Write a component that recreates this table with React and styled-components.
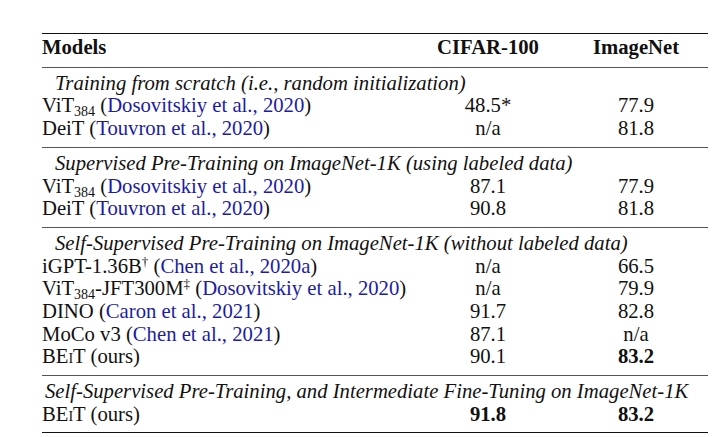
import React from "react";
import styled, { createGlobalStyle } from "styled-components";

const GlobalStyle = createGlobalStyle`
  html, body {
    margin: 0;
    padding: 0;
    background: #fff;
  }
  body {
    font-family: "Liberation Serif", "Times New Roman", serif;
    color: #111;
  }
`;

const Page = styled.div`
  padding: 33px 0 0 42px;
`;

const Table = styled.table`
  width: 666px;
  border-collapse: collapse;
  font-family: "Liberation Serif", "Times New Roman", serif;
  font-size: 20.7px;
  line-height: 22.7px;
  color: #111;
`;

const Head = styled.thead`
  border-top: 1.5px solid #111;
  border-bottom: 1px solid #555;
`;

const Group = styled.tbody`
  border-bottom: ${(p) => (p.$last ? "1.5px solid #111" : "1px solid #555")};
  & > tr:first-child > td {
    padding-top: 4px;
  }
  & > tr:last-child > td {
    padding-bottom: ${(p) => (p.$last ? "6px" : "7px")};
  }
`;

const HeadCell = styled.th`
  font-family: inherit;
  font-size: inherit;
  font-weight: bold;
  text-align: ${(p) => (p.$left ? "left" : "center")};
  padding: 2px 0 8px ${(p) => (p.$pl ? "8px" : "0")};
  width: ${(p) => p.$w}px;
`;

const Caption = styled.td`
  font-family: inherit;
  font-size: inherit;
  font-style: italic;
  padding: 0 0 0 ${(p) => p.$indent}px;
  white-space: nowrap;
`;

const Cell = styled.td`
  font-family: inherit;
  font-size: inherit;
  padding: 0 0 0 ${(p) => (p.$pl ? "8px" : "0")};
  text-align: ${(p) => (p.$left ? "left" : "center")};
  font-weight: ${(p) => (p.$bold ? "bold" : "normal")};
  white-space: nowrap;
`;

const Cite = styled.span`
  color: #1c1ca4;
`;

const Sub = styled.sub`
  font-size: 14px;
  line-height: 0;
  vertical-align: -4px;
`;

const Sup = styled.sup`
  font-size: 13px;
  line-height: 0;
  vertical-align: 7px;
`;

const Caps = styled.span`
  font-variant: small-caps;
`;

const Beit = () => (
  <>
    BE<Caps>i</Caps>T (ours)
  </>
);

const Vit = () => (
  <>
    ViT<Sub>384</Sub>
  </>
);

const groups = [
  {
    title: "Training from scratch (i.e., random initialization)",
    rows: [
      { model: <><Vit /> (<Cite>Dosovitskiy et al., 2020</Cite>)</>, cifar: "48.5*", imagenet: "77.9" },
      { model: <>DeiT (<Cite>Touvron et al., 2020</Cite>)</>, cifar: "n/a", imagenet: "81.8" },
    ],
  },
  {
    title: "Supervised Pre-Training on ImageNet-1K (using labeled data)",
    rows: [
      { model: <><Vit /> (<Cite>Dosovitskiy et al., 2020</Cite>)</>, cifar: "87.1", imagenet: "77.9" },
      { model: <>DeiT (<Cite>Touvron et al., 2020</Cite>)</>, cifar: "90.8", imagenet: "81.8" },
    ],
  },
  {
    title: "Self-Supervised Pre-Training on ImageNet-1K (without labeled data)",
    rows: [
      { model: <>iGPT-1.36B<Sup>†</Sup> (<Cite>Chen et al., 2020a</Cite>)</>, cifar: "n/a", imagenet: "66.5" },
      { model: <><Vit />-JFT300M<Sup>‡</Sup> (<Cite>Dosovitskiy et al., 2020</Cite>)</>, cifar: "n/a", imagenet: "79.9" },
      { model: <>DINO (<Cite>Caron et al., 2021</Cite>)</>, cifar: "91.7", imagenet: "82.8" },
      { model: <>MoCo v3 (<Cite>Chen et al., 2021</Cite>)</>, cifar: "87.1", imagenet: "n/a" },
      { model: <Beit />, cifar: "90.1", imagenet: "83.2", boldImagenet: true },
    ],
  },
  {
    title: "Self-Supervised Pre-Training, and Intermediate Fine-Tuning on ImageNet-1K",
    indent: 3,
    last: true,
    rows: [
      { model: <Beit />, cifar: "91.8", imagenet: "83.2", boldCifar: true, boldImagenet: true },
    ],
  },
];

export default function App() {
  return (
    <>
      <GlobalStyle />
      <Page>
        <Table>
          <Head>
            <tr>
              <HeadCell $left $w={378}>Models</HeadCell>
              <HeadCell $w={136}>CIFAR-100</HeadCell>
              <HeadCell $pl $w={144}>ImageNet</HeadCell>
            </tr>
          </Head>
          {groups.map((g) => (
            <Group key={g.title} $last={g.last}>
              <tr>
                <Caption colSpan={3} $indent={g.indent ?? 13}>
                  {g.title}
                </Caption>
              </tr>
              {g.rows.map((r, i) => (
                <tr key={i}>
                  <Cell $left>{r.model}</Cell>
                  <Cell $bold={r.boldCifar}>{r.cifar}</Cell>
                  <Cell $pl $bold={r.boldImagenet}>{r.imagenet}</Cell>
                </tr>
              ))}
            </Group>
          ))}
        </Table>
      </Page>
    </>
  );
}
